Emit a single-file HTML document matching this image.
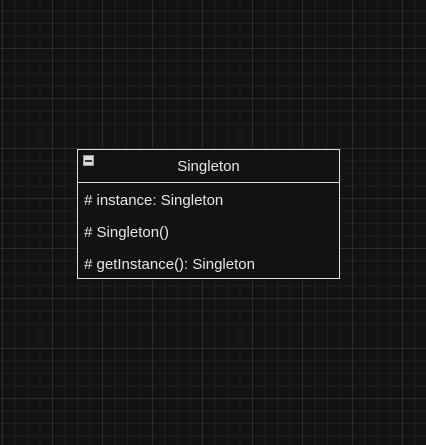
<!DOCTYPE html>
<html><head><style>
html,body{margin:0;padding:0;}
body{width:426px;height:445px;overflow:hidden;background-color:#121212;
background-image:
linear-gradient(90deg,#2c2c2c 1px,transparent 1px),
linear-gradient(0deg,#2c2c2c 1px,transparent 1px),
linear-gradient(90deg,#1d1d1d 1px,transparent 1px),
linear-gradient(0deg,#1d1d1d 1px,transparent 1px);
background-size:50px 50px,50px 50px,12.5px 12.5px,12.5px 12.5px;
background-position:2px 0,0 49px,2px 0,0 11.5px;
font-family:"Liberation Sans",sans-serif;color:#e6e6e6;font-size:15px;position:relative;}
.box{position:absolute;left:77px;top:149px;width:261px;height:128px;border:1px solid #e0e0e0;background:#121212;}
.hdr{height:32px;border-bottom:1px solid #e0e0e0;text-align:center;line-height:33px;}
.min{position:absolute;left:5px;top:5px;width:9px;height:9px;border:1px solid #9a9a9a;background:#dcdcdc;}
.min:after{content:"";position:absolute;left:1px;top:4px;width:7px;height:2px;background:#333;}
.row{position:absolute;left:6px;}
</style></head><body>
<div class="box">
<div class="hdr">Singleton</div>
<div class="min"></div>
<div class="row" style="top:42px">#&nbsp;instance: Singleton</div>
<div class="row" style="top:74px">#&nbsp;Singleton()</div>
<div class="row" style="top:106px">#&nbsp;getInstance(): Singleton</div>
</div>
</body></html>
